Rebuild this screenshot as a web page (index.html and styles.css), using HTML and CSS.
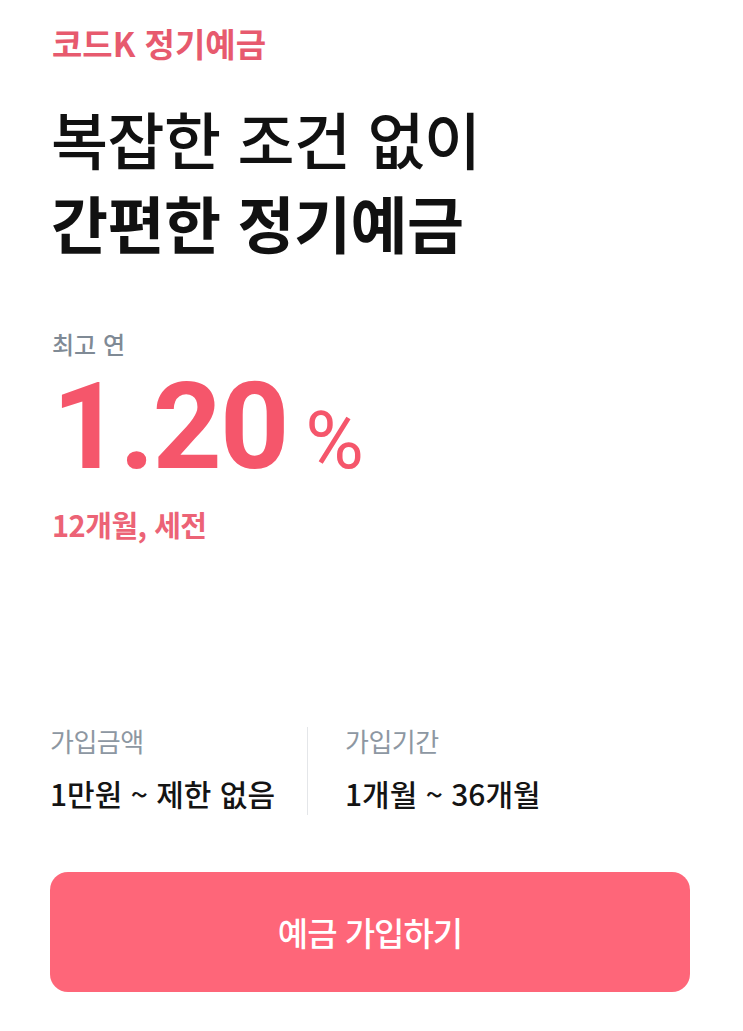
FILE: index.html
```html
<!DOCTYPE html>
<html lang="ko">
<head>
  <meta charset="UTF-8"/>
  <meta name="viewport" content="width=device-width,initial-scale=1.0"/>
  <title>코드K 정기예금</title>
  <link rel="stylesheet" href="styles.css">
</head>
<body>
  <div class="page">
    <!-- HEADER -->
    <div class="product-name">코드K 정기예금</div>
    <h1 class="headline">
      <span class="line-light">복잡한 조건 없이</span>
      <span class="line-bold">간편한 정기예금</span>
    </h1>

    <!-- RATE -->
    <div class="rate-box">
      <div class="rate-label">최고 연</div>
      <div class="rate-value">1.20<span class="rate-unit">%</span></div>
      <div class="rate-note">12개월, 세전</div>
    </div>

    <!-- INFO -->
    <div class="info-row">
      <div class="info-col">
        <div class="info-title">가입금액</div>
        <div class="info-text">1만원 ~ 제한 없음</div>
      </div>
      <div class="info-divider"></div>
      <div class="info-col">
        <div class="info-title">가입기간</div>
        <div class="info-text">1개월 ~ 36개월</div>
      </div>
    </div>

    <button class="join-btn">예금 가입하기</button>
  </div>
</body>
</html>
```

FILE: styles.css
```css
/* RESET */
* {
  margin: 0;
  padding: 0;
  box-sizing: border-box;
}

html, body {
  background: #fff;
  font-family: 'Noto Sans CJK KR', 'Noto Sans', sans-serif;
  color: #111;
}

.page {
  width: 743px;
  height: 1031px;
  padding: 20px 53px 0 50px;
  display: flex;
  flex-direction: column;
  align-items: flex-start;
}

/* HEADER */
.product-name {
  font-size: 33px;
  font-weight: 700;
  color: #e75a6e;
  line-height: 46px;
  padding-left: 2px;
}

.headline {
  margin-top: 30px;
  font-size: 62px;
  letter-spacing: -0.5px;
  display: flex;
  flex-direction: column;
  padding-left: 1px;
}

.headline .line-light {
  font-weight: 500;
  line-height: 84px;
}

.headline .line-bold {
  font-weight: 700;
  line-height: 84px;
}

/* RATE */
.rate-box {
  margin-top: 68px;
  padding-left: 2px;
}

.rate-label {
  font-size: 24px;
  font-weight: 500;
  color: #7f8a95;
  line-height: 24px;
}

.rate-value {
  font-family: 'Roboto', 'Noto Sans', sans-serif;
  font-size: 121px;
  font-weight: 700;
  color: #f5566b;
  line-height: 142px;
  letter-spacing: -2px;
}

.rate-unit {
  font-size: 80px;
  font-weight: 400;
  line-height: 0;
  margin-left: 18px;
}

.rate-note {
  margin-top: 6px;
  font-size: 29px;
  font-weight: 700;
  color: #ec6376;
  line-height: 40px;
  letter-spacing: -0.5px;
}

/* INFO */
.info-row {
  margin-top: 180px;
  display: flex;
}

.info-col {
  width: 257px;
}

.info-divider + .info-col {
  padding-left: 37px;
}

.info-divider {
  width: 1px;
  height: 88px;
  margin-top: 3px;
  background: #e4e6e9;
}

.info-title {
  font-size: 26px;
  color: #8d97a2;
  line-height: 34px;
  letter-spacing: -0.5px;
}

.info-text {
  margin-top: 15px;
  font-size: 30px;
  font-weight: 500;
  color: #141414;
  line-height: 40px;
}

/* BUTTON */
.join-btn {
  margin-top: 57px;
  width: 640px;
  height: 120px;
  border: none;
  border-radius: 18px;
  background: #fe6679;
  color: #fff;
  font-family: 'Noto Sans CJK KR', sans-serif;
  font-size: 33px;
  font-weight: 500;
  letter-spacing: -1px;
  cursor: pointer;
}
```
